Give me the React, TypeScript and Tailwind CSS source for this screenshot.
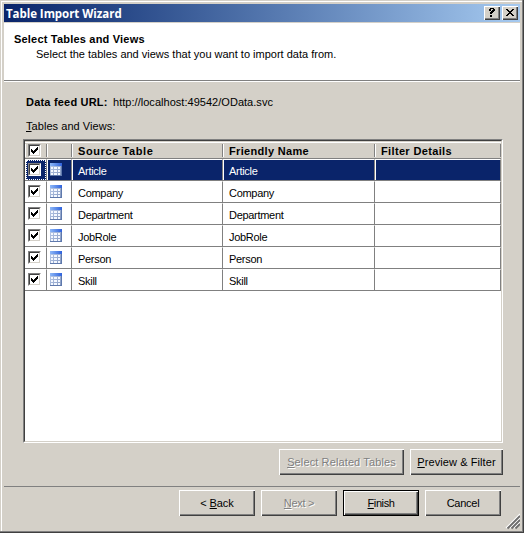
import React from "react";

const tables = ["Article", "Company", "Department", "JobRole", "Person", "Skill"];

const raised =
  "shadow-[inset_1px_1px_0_#fff,inset_-1px_-1px_0_#404040,inset_-2px_-2px_0_#808080]";

function Check() {
  return (
    <div className="h-[13px] w-[13px] shrink-0 border border-t-[#808080] border-l-[#808080] border-r-white border-b-white bg-white">
      <div className="h-[11px] w-[11px] border border-t-[#404040] border-l-[#404040] border-r-[#d4d0c8] border-b-[#d4d0c8]">
        <svg width="9" height="9" viewBox="0 0 9 9" shapeRendering="crispEdges" className="block">
          <path
            fill="#000"
            d="M1 3h1v3h-1zM2 4h1v3h-1zM3 5h1v3h-1zM4 4h1v3h-1zM5 3h1v3h-1zM6 2h1v3h-1zM7 1h1v3h-1z"
          />
        </svg>
      </div>
    </div>
  );
}

function TableIcon() {
  return (
    <svg width="12" height="13" viewBox="0 0 12 13" shapeRendering="crispEdges" className="block">
      <defs>
        <linearGradient id="head" x1="0" x2="1" y1="0" y2="0">
          <stop offset="0" stopColor="#8db8f8" />
          <stop offset="1" stopColor="#2f62dc" />
        </linearGradient>
        <linearGradient id="grid" x1="0" x2="1" y1="0" y2="1">
          <stop offset="0" stopColor="#bccdec" />
          <stop offset="1" stopColor="#8498c0" />
        </linearGradient>
      </defs>
      <rect width="12" height="13" fill="url(#grid)" />
      <rect width="12" height="3" fill="url(#head)" />
      <path
        fill="#f4f8ff"
        d="M1 4h2v2h-2zM4 4h3v2h-3zM8 4h2v2h-2zM1 7h2v2h-2zM4 7h3v2h-3zM8 7h2v2h-2zM1 10h2v2h-2zM4 10h3v2h-3zM8 10h2v2h-2z"
      />
      <path fill="#5f79ac" d="M11 3h1v10h-12v-1h11z" />
    </svg>
  );
}

function Key({ children }: { children: string }) {
  return <span className="underline decoration-1 underline-offset-[1px]">{children}</span>;
}

type ButtonProps = {
  className: string;
  disabled?: boolean;
  isDefault?: boolean;
  children: React.ReactNode;
};

function Button({ className, disabled, isDefault, children }: ButtonProps) {
  return (
    <button
      disabled={disabled}
      className={`flex h-[26px] shrink-0 justify-center whitespace-nowrap bg-[#d4d0c8] ${
        isDefault ? "border border-black pt-[6px]" : "pt-[7px]"
      } ${raised} ${disabled ? "text-[#808080] [text-shadow:1px_1px_0_#fff]" : ""} ${className}`}
    >
      <span className="block leading-[13px]">{children}</span>
    </button>
  );
}

function HeaderCell({ className, children }: { className: string; children?: React.ReactNode }) {
  return (
    <div className={`flex h-[13px] shrink-0 items-center border-r border-[#808080] font-bold ${className}`}>
      {children}
    </div>
  );
}

function Cell({
  className,
  selected,
  children,
}: {
  className: string;
  selected: boolean;
  children?: React.ReactNode;
}) {
  return (
    <div className={`shrink-0 border-t border-r border-l border-t-white border-r-[#808080] border-l-white ${className}`}>
      <div className={`flex h-[20px] pl-[2px] ${selected ? "bg-[#0a246a] text-white" : ""}`}>{children}</div>
    </div>
  );
}

export default function App() {
  return (
    <div className="h-[533px] w-[524px] overflow-hidden bg-[#d4d0c8] font-['Liberation_Sans',Arial,sans-serif] text-[11px] leading-[13px] text-black shadow-[inset_-1px_-1px_0_#404040,inset_-2px_-2px_0_#808080,inset_1px_1px_0_#d4d0c8,inset_2px_2px_0_#fff]">
      <div className="flex h-full flex-col px-1 pt-1">
        <header className="flex h-[18px] shrink-0 items-center bg-linear-to-r from-[#0a246a] to-[#a6caf0] pr-[2px] pl-[2px]">
          <h1 className="flex-1 font-['Open_Sans',sans-serif] text-[11.5px] font-bold tracking-[-0.05px] text-white">
            Table Import Wizard
          </h1>
          <button className={`mr-[2px] h-[14px] w-4 bg-[#d4d0c8] ${raised}`}>
            <svg width="16" height="14" viewBox="0 0 16 14" shapeRendering="crispEdges" className="block">
              <path d="M5 3h1v-1h4v1h1v2h-1v1h-1v1h-1v1h-2v-2h1v-1h1v-1h1v-1h-2v2h-2zM6 9h2v2h-2z" />
            </svg>
          </button>
          <button className={`h-[14px] w-4 bg-[#d4d0c8] ${raised}`}>
            <svg width="16" height="14" viewBox="0 0 16 14" shapeRendering="crispEdges" className="block">
              <path d="M4 3h2v1h1v1h2v-1h1v-1h2v1h-1v1h-1v1h-1v1h1v1h1v1h1v1h-2v-1h-1v-1h-2v1h-1v1h-2v-1h1v-1h1v-1h1v-1h-1v-1h-1v-1h-1z" />
            </svg>
          </button>
        </header>

        <section className="mt-px h-[59px] shrink-0 border-b border-white bg-white">
          <div className="h-[58px] border-b border-[#808080] pt-[10px] pl-[10px]">
            <h2 className="font-bold tracking-[0.2px]">Select Tables and Views</h2>
            <p className="mt-[2px] pl-[22px]">
              Select the tables and views that you want to import data from.
            </p>
          </div>
        </section>

        <main className="flex h-[405px] shrink-0 flex-col border-b border-[#808080] pr-[17px] pl-[19px]">
          <p className="mt-[14px] pl-[3px]">
            <b className="inline-block w-[87px] tracking-[0.2px]">Data feed URL:</b>
            <span className="tracking-[0.03px]">http://localhost:49542/OData.svc</span>
          </p>
          <p className="mt-[11px] pl-[3px] tracking-[0.05px]">
            <Key>T</Key>ables and Views:
          </p>

          <div className="mt-[6px] h-[304px] w-[480px] shrink-0 border border-t-[#808080] border-l-[#808080] border-r-white border-b-white">
            <div className="h-[302px] border border-t-[#404040] border-l-[#404040] border-r-[#d4d0c8] border-b-[#d4d0c8] bg-white">
              <div className="flex h-[18px] border-b border-[#808080] bg-[#d4d0c8] pt-px">
                <div className="flex flex-1 border-t border-white pt-px">
                  <HeaderCell className="w-[22px] border-l border-l-white pl-[2px]">
                    <Check />
                  </HeaderCell>
                  <HeaderCell className="w-[25px] border-l border-l-white" />
                  <HeaderCell className="w-[151px] border-l border-l-white pt-[2px] pl-[5px] tracking-[0.6px]">
                    Source Table
                  </HeaderCell>
                  <HeaderCell className="w-[152px] border-l border-l-white pt-[2px] pl-[5px] tracking-[0.32px]">
                    Friendly Name
                  </HeaderCell>
                  <HeaderCell className="w-[126px] border-l border-l-white pt-[2px] pl-[5px] tracking-[0.35px]">
                    Filter Details
                  </HeaderCell>
                </div>
              </div>
              {tables.map((name, i) => {
                const selected = i === 0;
                return (
                  <div key={name} className="flex h-[22px] border-b border-[#808080] tracking-[-0.3px]">
                    <Cell selected={selected} className="w-[22px]">
                      <div
                        className={`-ml-[2px] h-[20px] w-[20px] pt-[3px] pl-[2px] ${
                          selected ? "outline-1 -outline-offset-1 outline-dotted outline-white" : ""
                        }`}
                      >
                        <Check />
                      </div>
                    </Cell>
                    <Cell selected={selected} className="w-[25px]">
                      <div className="pt-[3px]">
                        <TableIcon />
                      </div>
                    </Cell>
                    <Cell selected={selected} className="w-[151px]">
                      <span className="pt-[5px] pl-[3px]">{name}</span>
                    </Cell>
                    <Cell selected={selected} className="w-[152px]">
                      <span className="pt-[5px] pl-[3px]">{name}</span>
                    </Cell>
                    <Cell selected={selected} className="w-[126px]" />
                  </div>
                );
              })}
            </div>
          </div>

          <div className="mt-[6px] flex justify-end gap-[6px]">
            <Button className="w-[125px] tracking-[0.12px]" disabled>
              <Key>S</Key>elect Related Tables
            </Button>
            <Button className="w-[93px] tracking-[0.08px]">
              <Key>P</Key>review &amp; Filter
            </Button>
          </div>
        </main>

        <footer className="flex shrink-0 pt-[3px]">
          <div className="flex flex-1 justify-end gap-[6px]">
            <Button className="w-[76px] tracking-[-0.1px]">
              &lt; <Key>B</Key>ack
            </Button>
            <Button className="w-[76px] tracking-[-0.3px]" disabled>
              <Key>N</Key>ext &gt;
            </Button>
            <Button className="w-[76px] tracking-[-0.4px]" isDefault>
              <Key>F</Key>inish
            </Button>
            <Button className="w-[76px] tracking-[-0.25px]">Cancel</Button>
          </div>
          <svg width="19" height="40" viewBox="0 0 19 40" className="shrink-0">
            <path stroke="#fff" strokeWidth="1.2" d="M5 38L19 24M9 38L19 28M13 38L19 32" />
            <path stroke="#6e6e6e" strokeWidth="1.8" d="M6.500 38.500L19 26M10.500 38.500L19 30M14.500 38.500L19 34" />
          </svg>
        </footer>
      </div>
    </div>
  );
}
